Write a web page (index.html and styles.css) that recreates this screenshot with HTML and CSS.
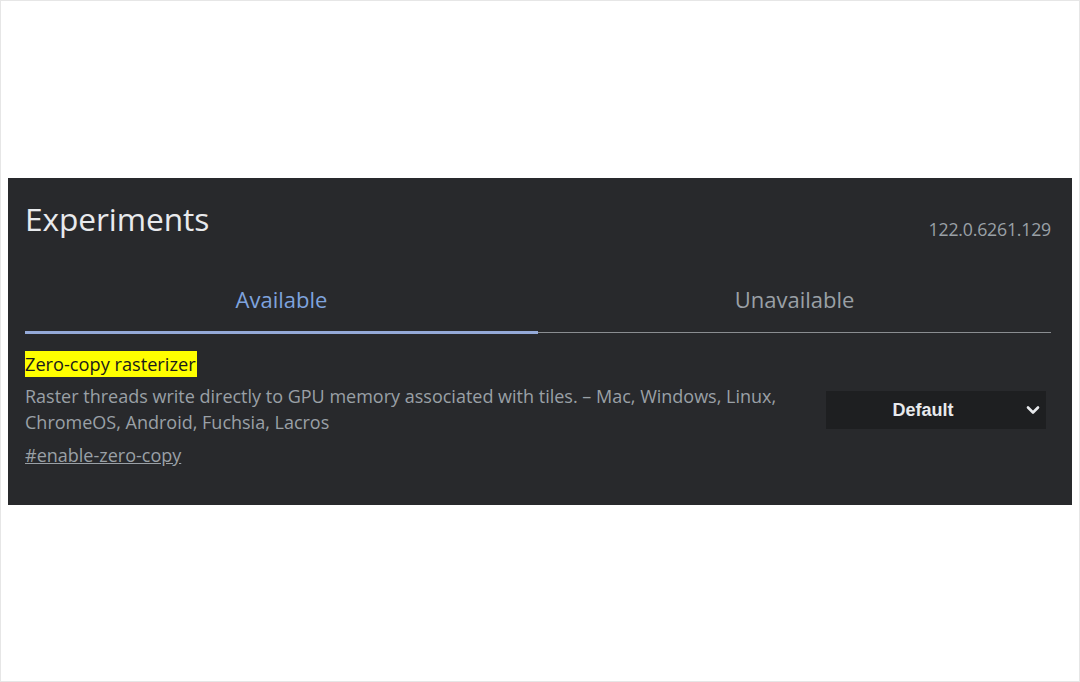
FILE: index.html
```html
<!DOCTYPE html>
<html lang="en">
<head>
<meta charset="utf-8">
<title>Experiments</title>
<link rel="stylesheet" href="styles.css">
</head>
<body>
<div class="frame">
  <main class="panel">
    <header class="head">
      <h1 class="title">Experiments</h1>
      <span class="version">122.0.6261.129</span>
    </header>
    <nav class="tabs">
      <div class="tab active">Available</div>
      <div class="tab">Unavailable</div>
    </nav>
    <section class="flag">
      <div class="flag-text">
        <h2 class="flag-name"><mark class="hl">Zero-copy rasterizer</mark></h2>
        <p class="flag-desc">Raster threads write directly to GPU memory associated with tiles. – Mac, Windows, Linux, ChromeOS, Android, Fuchsia, Lacros</p>
        <a class="flag-link" href="#enable-zero-copy">#enable-zero-copy</a>
      </div>
      <div class="select">
        <span class="select-value">Default</span>
        <svg class="chev" width="14" height="10" viewBox="0 0 14 10"><path d="M2 2.5 L7 7.5 L12 2.5" fill="none" stroke="#e8eaed" stroke-width="2.6" stroke-linecap="round" stroke-linejoin="round"/></svg>
      </div>
    </section>
  </main>
</div>
</body>
</html>
```

FILE: styles.css
```css
html, body {
  margin: 0;
  padding: 0;
  background: #ffffff;
}
.frame {
  box-sizing: border-box;
  width: 1080px;
  height: 682px;
  border: 1px solid #e6e6e6;
  padding: 177px 7px 0 7px;
}
.panel {
  background: #28292c;
  height: 327px;
  box-sizing: border-box;
  padding: 0 21px 0 17px;
  font-family: "Open Sans", "Noto Sans", sans-serif;
}
.head {
  display: flex;
  justify-content: space-between;
  align-items: flex-end;
  height: 64px;
}
.title {
  margin: 0;
  font-size: 31.7px;
  font-weight: 400;
  color: #e8eaed;
  line-height: 1;
  padding-bottom: 7px;
  letter-spacing: -0.1px;
}
.version {
  font-size: 17.7px;
  color: #9aa0a6;
  line-height: 22px;
  margin-bottom: 2px;
  letter-spacing: -0.2px;
}
.tabs {
  display: flex;
  margin-top: 32px;
  height: 59px;
}
.tab {
  flex: 1;
  text-align: center;
  font-size: 22px;
  color: #9aa0a6;
  line-height: 26px;
  padding-top: 12px;
  border-bottom: 1px solid #8a8d91;
  box-sizing: border-box;
}
.tab.active {
  color: #7fa3de;
  border-bottom: 3px solid #94a9d8;
  margin-bottom: -1px;
}
.flag {
  display: flex;
  align-items: flex-start;
  margin-top: 19px;
}
.flag-text {
  flex: 1;
}
.flag-name {
  margin: 0;
  font-size: 18.2px;
  font-weight: 400;
  line-height: 25px;
}
.hl {
  background: #ffff00;
  color: #1a1a1a;
  padding: 1px 1px 1px 0;
}
.flag-desc {
  margin: 6px 0 0 0;
  font-size: 18px;
  line-height: 26px;
  color: #9aa0a6;
  width: 790px;
}
.flag-link {
  display: inline-block;
  margin-top: 9px;
  font-size: 18px;
  line-height: 22px;
  color: #9aa0a6;
  text-decoration: underline;
}
.select {
  margin-top: 39px;
  margin-right: 5px;
  width: 220px;
  height: 38px;
  background: #1e1f21;
  display: flex;
  align-items: center;
}
.select-value {
  flex: 1;
  text-align: center;
  font-family: "Liberation Sans", Arial, sans-serif;
  font-weight: 700;
  font-size: 18px;
  color: #e8eaed;
  padding-right: 6px;
}
.chev {
  margin-right: 6px;
}
```
